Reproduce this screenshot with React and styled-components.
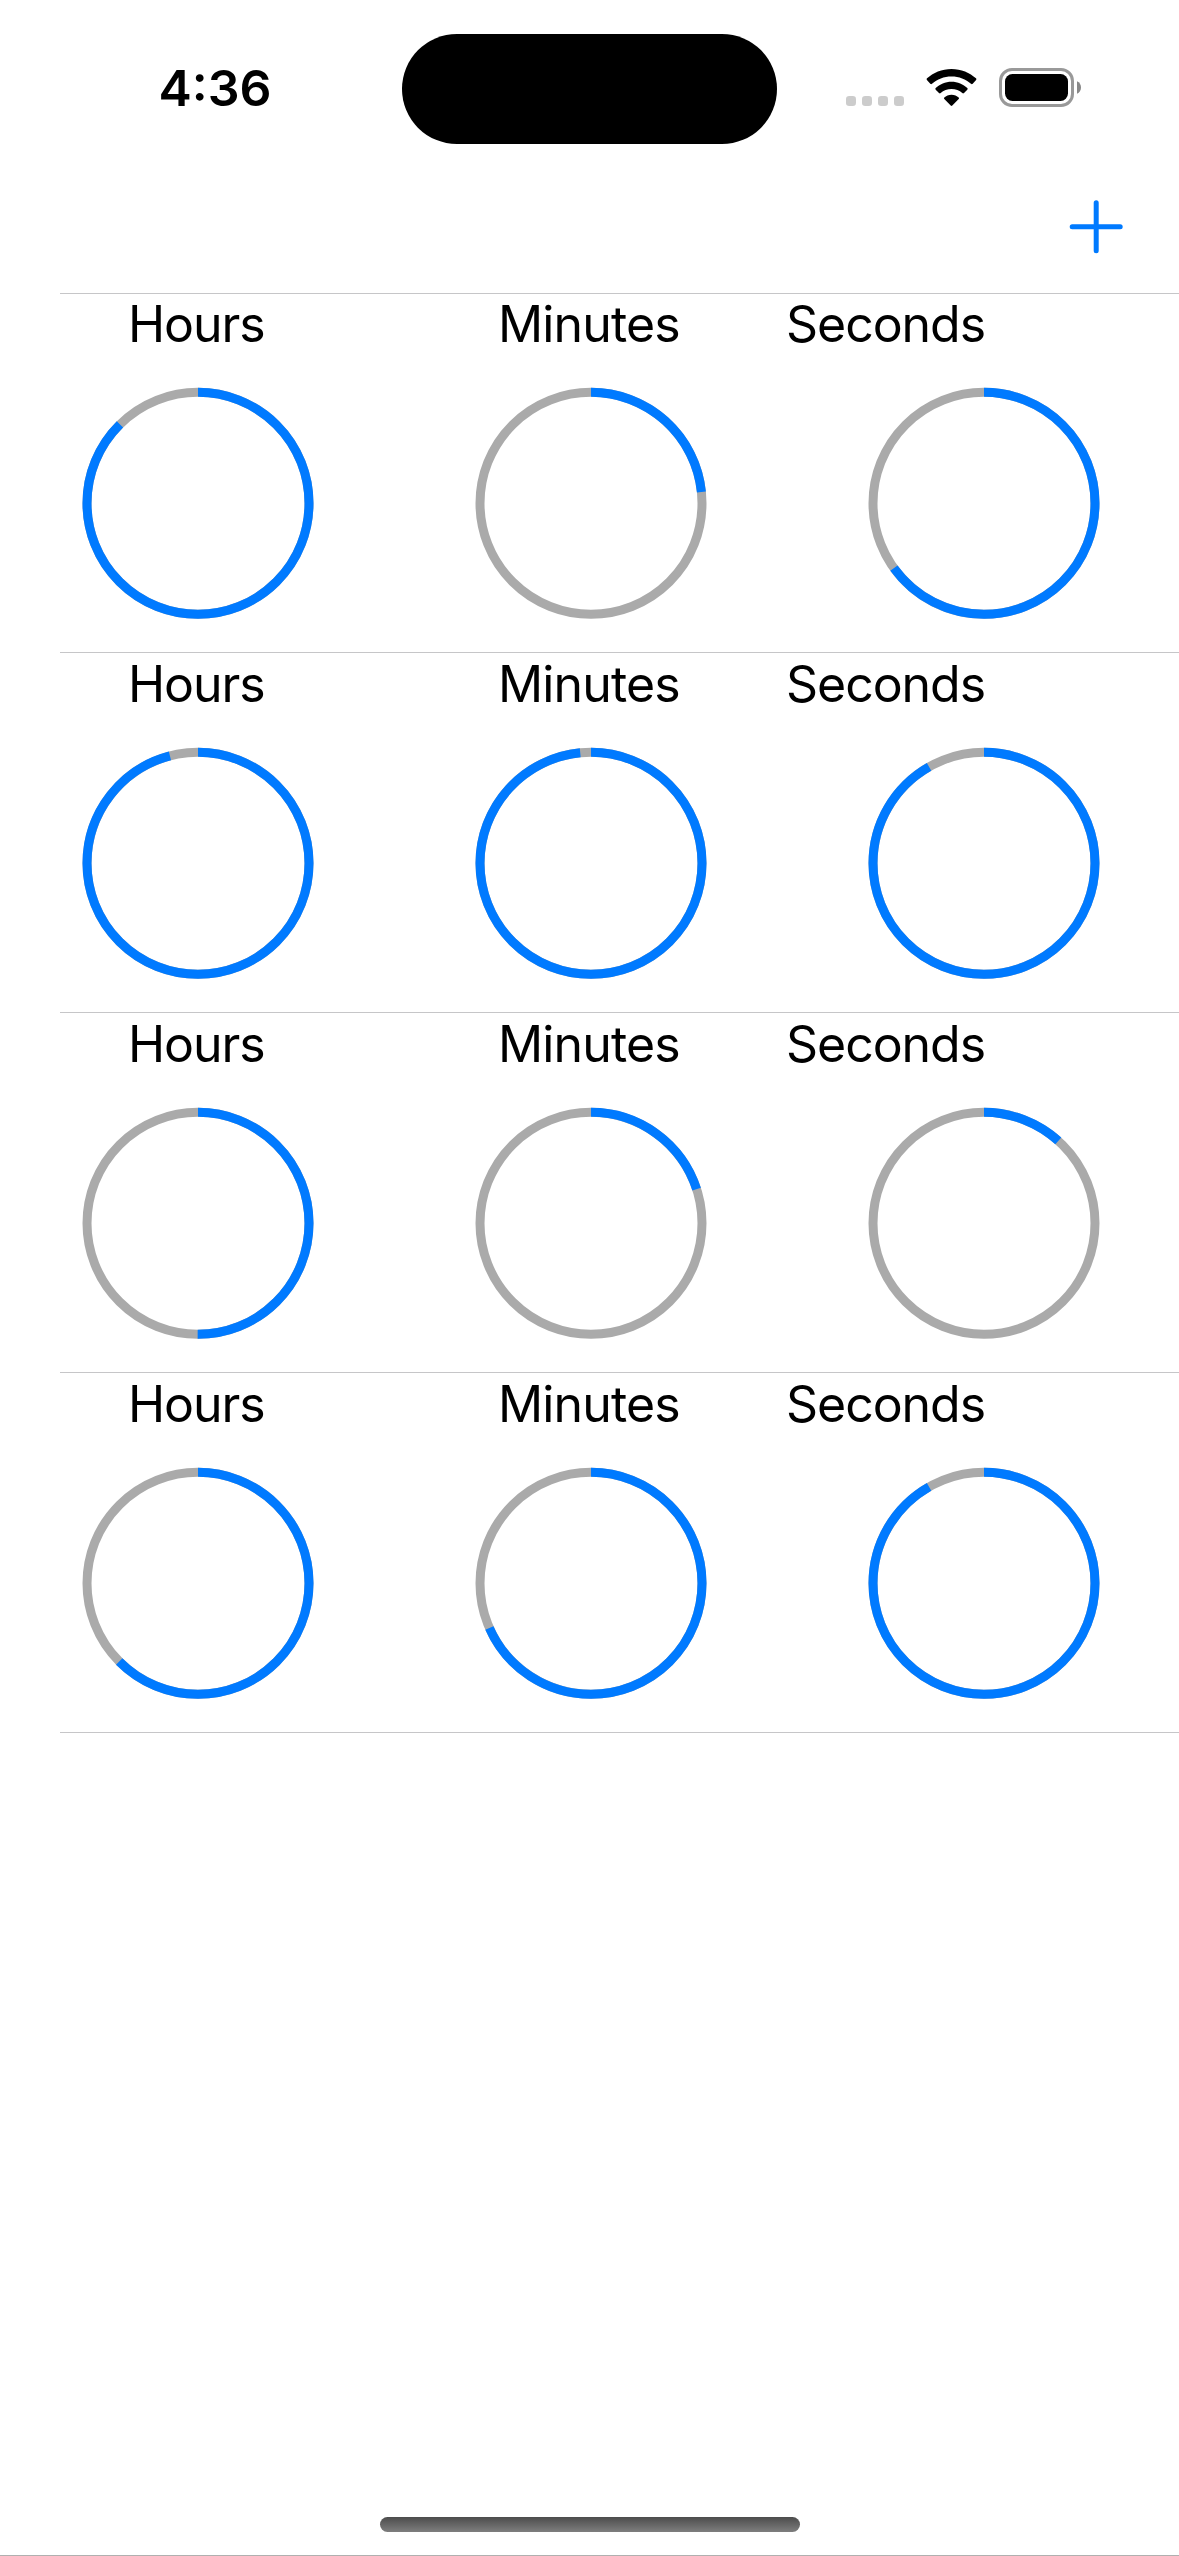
import React from "react";
import styled, { createGlobalStyle } from "styled-components";

const GlobalStyle = createGlobalStyle`
  * { box-sizing: border-box; }
  body { margin: 0; background: #fff; }
`;

const Screen = styled.main`
  display: flex;
  flex-direction: column;
  width: 1179px;
  height: 2556px;
  overflow: hidden;
  background: #fff;
  color: #000;
  font-family: Inter, "Liberation Sans", sans-serif;
  border-bottom: 1px solid #b0b0b0;
`;

const StatusBar = styled.header`
  display: grid;
  grid-template-columns: 402px 375px 402px;
  height: 177px;
  padding-top: 34px;
  align-items: start;
`;

const Clock = styled.time`
  padding: 23px 0 0 158.4px;
  font-size: 50px;
  line-height: 62px;
  font-weight: 600;
  white-space: nowrap;
`;

const Island = styled.div`
  height: 110px;
  border-radius: 55px;
  background: #000;
`;

const StatusIcons = styled.div`
  display: flex;
  padding: 32px 0 0 68px;
`;

const NavBar = styled.nav`
  display: flex;
  justify-content: flex-end;
  height: 116px;
  padding: 22px 54px 0 0;
`;

const AddButton = styled.button`
  display: block;
  width: 58px;
  height: 58px;
  padding: 0;
  border: 0;
  background: none;
  color: #007aff;
`;

const List = styled.ul`
  margin: 0;
  padding: 0;
  list-style: none;
  flex: 1;
`;

const Row = styled.li`
  display: grid;
  grid-template-columns: repeat(3, 393px);
  height: 360px;
  background: linear-gradient(#c6c6c8, #c6c6c8) 60px 100% / 100% 1px no-repeat;
  &:first-child {
    background:
      linear-gradient(#c6c6c8, #c6c6c8) 60px 0 / 100% 1px no-repeat,
      linear-gradient(#c6c6c8, #c6c6c8) 60px 100% / 100% 1px no-repeat;
  }
`;

const Unit = styled.section`
  display: flex;
  flex-direction: column;
  align-items: center;
`;

const Label = styled.span`
  width: 393px;
  height: 94px;
  padding-top: 1px;
  padding-left: ${(p) => p.$indent}px;
  font-size: 50px;
  line-height: 60px;
  letter-spacing: ${(p) => p.$tracking}px;
  white-space: nowrap;
`;

const Dial = styled.svg`
  display: block;
  width: 232px;
  height: 232px;
  margin-left: 3px;
`;

const HomeArea = styled.footer`
  display: flex;
  justify-content: center;
  height: 38px;
`;

const HomeIndicator = styled.div`
  width: 420px;
  height: 15px;
  border-radius: 8px;
  background: linear-gradient(#4c4c4c, #7e7e7e);
`;

const RADIUS = 111;
const LENGTH = 2 * Math.PI * RADIUS;

const units = [
  { key: "hours", label: "Hours", max: 24, indent: 128, tracking: -1.05 },
  { key: "minutes", label: "Minutes", max: 60, indent: 105, tracking: -0.85 },
  { key: "seconds", label: "Seconds", max: 60, indent: 0, tracking: -1.05 },
];

const timers = [
  { hours: 21, minutes: 14, seconds: 39 },
  { hours: 23, minutes: 59, seconds: 55 },
  { hours: 12, minutes: 12, seconds: 7 },
  { hours: 15, minutes: 41, seconds: 55 },
];

function Ring({ fraction }) {
  return (
    <Dial viewBox="0 0 232 232" fill="none" strokeWidth="9">
      <circle cx="116" cy="116.3" r={RADIUS} stroke="#aaaaaa" />
      <circle
        cx="116"
        cy="116.3"
        r={RADIUS}
        stroke="#007aff"
        strokeDasharray={`${fraction * LENGTH} ${LENGTH}`}
        transform="rotate(-90 116 116.3)"
      />
    </Dial>
  );
}

function StatusGlyphs() {
  return (
    <svg width="240" height="44" viewBox="0 0 240 44">
      <g fill="#cccccc">
        {[1, 17, 33, 49].map((x) => (
          <rect key={x} x={x} y="30" width="10" height="10" rx="3.2" />
        ))}
      </g>
      <g transform="translate(81.5 2.7)">
        <path d="M25 0.2C34.6 0.2 43.4 4 49.5 9.6Q50.3 10.4 49.6 11.2L46.2 15.1Q45.4 15.9 44.5 15.1C39.4 10.4 32.5 7.8 25 7.8S10.6 10.4 5.5 15.1Q4.6 15.9 3.8 15.1L0.4 11.2Q-0.3 10.4 0.5 9.6C6.6 4 15.4 0.2 25 0.2Z" />
        <path d="M25 13.1C31.2 13.1 36.8 15.6 40.8 19.4Q41.6 20.2 40.8 21L37.5 24.4Q36.6 25.2 35.8 24.4C33 21.8 29.1 20.4 25 20.4S17 21.8 14.2 24.4Q13.4 25.2 12.5 24.4L9.2 21Q8.4 20.2 9.2 19.4C13.2 15.6 18.8 13.1 25 13.1Z" />
        <path d="M25 26C27.9 26 30.4 27.2 32.2 28.7Q33 29.5 32.2 30.3L25.8 36.8Q25 37.6 24.2 36.8L17.8 30.3Q17 29.5 17.8 28.7C19.6 27.2 22.1 26 25 26Z" />
      </g>
      <rect x="155.5" y="3.5" width="72" height="36" rx="11.5" fill="none" stroke="#999999" strokeWidth="3" />
      <rect x="160" y="8" width="63" height="27" rx="7.5" />
      <path d="M232 15.3C234.6 16.4 236 18.8 236 21.5S234.6 26.6 232 27.7Z" fill="#888888" />
    </svg>
  );
}

export default function App() {
  return (
    <Screen>
      <GlobalStyle />
      <StatusBar>
        <Clock>4:36</Clock>
        <Island />
        <StatusIcons>
          <StatusGlyphs />
        </StatusIcons>
      </StatusBar>
      <NavBar>
        <AddButton aria-label="Add">
          <svg width="58" height="58" viewBox="0 0 58 58" stroke="currentColor" strokeWidth="5" strokeLinecap="round">
            <path d="M29.2 3.7V51.7M5.2 27.7H53.2" />
          </svg>
        </AddButton>
      </NavBar>
      <List>
        {timers.map((timer, i) => (
          <Row key={i}>
            {units.map((u) => (
              <Unit key={u.key}>
                <Label $indent={u.indent} $tracking={u.tracking}>
                  {u.label}
                </Label>
                <Ring fraction={timer[u.key] / u.max} />
              </Unit>
            ))}
          </Row>
        ))}
      </List>
      <HomeArea>
        <HomeIndicator />
      </HomeArea>
    </Screen>
  );
}
